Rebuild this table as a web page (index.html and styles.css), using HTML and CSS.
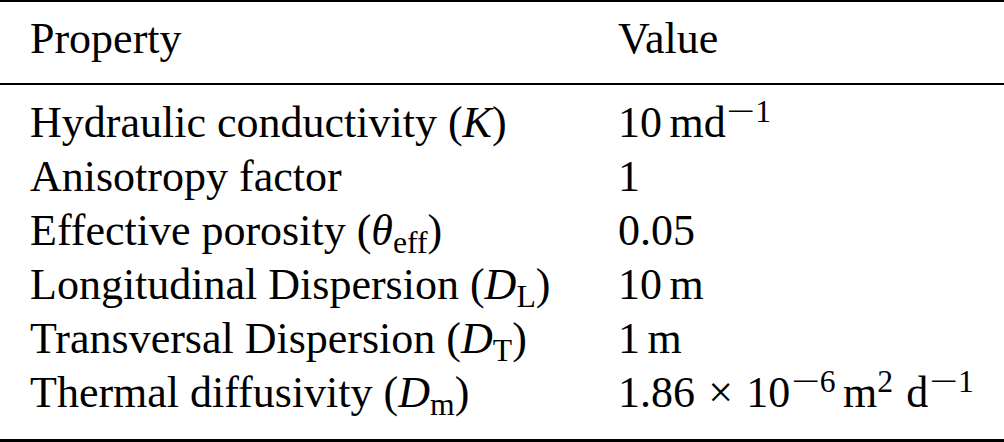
FILE: index.html
```html
<!DOCTYPE html>
<html>
<head>
<meta charset="utf-8">
<link rel="stylesheet" href="styles.css">
</head>
<body>
<div class="table">
  <div class="rule rule-top"></div>
  <div class="head">
    <div class="cell">Property</div>
    <div class="cell">Value</div>
  </div>
  <div class="rule rule-mid"></div>
  <div class="body">
    <div class="cell">Hydraulic conductivity (<i class="m">K</i>)</div>
    <div class="cell">10<span class="ts"></span>md<sup class="sup"><span class="mi">−</span>1</sup></div>
    <div class="cell">Anisotropy factor</div>
    <div class="cell">1</div>
    <div class="cell">Effective porosity (<i class="m">θ</i><sub class="sub">eff</sub>)</div>
    <div class="cell">0.05</div>
    <div class="cell">Longitudinal Dispersion (<i class="m">D</i><sub class="sub">L</sub>)</div>
    <div class="cell">10<span class="ts"></span>m</div>
    <div class="cell">Transversal Dispersion (<i class="m">D</i><sub class="sub">T</sub>)</div>
    <div class="cell">1<span class="ts"></span>m</div>
    <div class="cell">Thermal diffusivity (<i class="m">D</i><sub class="sub">m</sub>)</div>
    <div class="cell">1.86<span class="op">×</span>10<sup class="sup"><span class="mi">−</span>6</sup><span class="ts"></span>m<sup class="sup">2</sup><span class="ts2"></span>d<sup class="sup"><span class="mi">−</span>1</sup></div>
  </div>
  <div class="rule rule-bot"></div>
</div>
</body>
</html>
```

FILE: styles.css
```css
html, body {
  margin: 0;
  padding: 0;
  background: #fff;
}
body {
  font-family: "Liberation Serif", "Times New Roman", serif;
  font-size: 44px;
  color: #000;
}
.table {
  width: 1004px;
  height: 442px;
  display: flex;
  flex-direction: column;
}
.rule {
  background: #000;
  width: 100%;
}
.rule-top { height: 2px; }
.rule-mid { height: 2px; }
.rule-bot { height: 3px; }
.head, .body {
  display: grid;
  grid-template-columns: 588px auto;
  padding-left: 30px;
  line-height: 54px;
}
.head {
  padding-top: 10px;
  padding-bottom: 17px;
}
.body {
  padding-top: 11px;
  padding-bottom: 19px;
}
.cell {
  white-space: nowrap;
}
.m {
  font-style: italic;
}
.sub {
  font-size: 0.72em;
  line-height: 0;
  vertical-align: -0.24em;
}
.sup {
  font-size: 0.72em;
  line-height: 0;
  vertical-align: 0.47em;
}
.mi {
  display: inline-block;
  transform: scaleX(1.6);
  margin: 0 0.17em 0 0.2em;
}
.ts {
  display: inline-block;
  width: 0.17em;
}
.ts2 {
  display: inline-block;
  width: 0.3em;
}
.op {
  margin: 0 0.3em;
}
```
